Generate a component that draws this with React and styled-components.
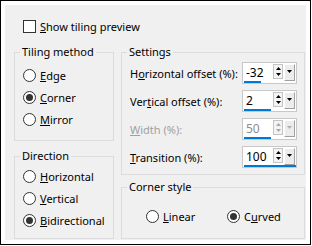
import React from 'react'
import styled, { createGlobalStyle } from 'styled-components'

const GlobalStyle = createGlobalStyle`
  html, body {
    margin: 0;
    padding: 0;
    background: #fff;
  }
  body {
    font-family: "Noto Sans", "Open Sans", sans-serif;
    font-size: 11px;
    color: #000;
  }
`

const Frame = styled.div`
  box-sizing: border-box;
  width: 311px;
  height: 245px;
  border: 1px solid #000;
  background: #fff;
  padding: 4px;
`

const Panel = styled.div`
  box-sizing: border-box;
  height: 100%;
  background: #f0f0f0;
  padding: 13px 1px 0 9px;
  display: flex;
  flex-direction: column;
`

const PreviewRow = styled.label`
  display: flex;
  align-items: center;
  gap: 4px;
  height: 16px;
  padding-left: 9px;
`

const Columns = styled.div`
  display: grid;
  grid-template-columns: 100px 184px;
  column-gap: 7px;
  margin-top: 18px;
`

const Column = styled.div`
  display: flex;
  flex-direction: column;
  gap: ${p => p.$gap}px;
`

const Group = styled.div`
  position: relative;
  box-sizing: border-box;
  height: ${p => p.$h}px;
  border: 1px solid #dcdcdc;
  padding: ${p => p.$pad};
  display: flex;
  flex-direction: ${p => (p.$row ? 'row' : 'column')};
  gap: ${p => p.$gap || 0}px;
`

// legend sits on top of the group's border line
const Legend = styled.span`
  position: absolute;
  top: -9px;
  left: 5px;
  padding: 0 2px;
  line-height: 16px;
  background: #f0f0f0;
`

const Option = styled.div`
  display: flex;
  align-items: center;
  gap: 4px;
  height: ${p => p.$h || 22}px;
  min-width: ${p => p.$w || 0}px;
`

const RadioDot = styled.span`
  box-sizing: border-box;
  flex: none;
  width: 13px;
  height: 13px;
  border: 1px solid #333;
  border-radius: 50%;
  background: #fff;
  display: flex;
  align-items: center;
  justify-content: center;

  &::after {
    content: '';
    width: 7px;
    height: 7px;
    border-radius: 50%;
    background: #333;
    display: ${p => (p.$checked ? 'block' : 'none')};
  }
`

const CheckBox = styled.span`
  box-sizing: border-box;
  flex: none;
  width: 13px;
  height: 13px;
  border: 1px solid #333;
  background: #fff;
`

const Key = styled.span`
  text-decoration: underline;
  text-underline-offset: 1px;
`

const SettingRow = styled.div`
  display: flex;
  align-items: center;
  justify-content: space-between;
  height: 22px;
  color: ${p => (p.$disabled ? '#a0a0a0' : '#000')};
`

const Spinner = styled.div`
  box-sizing: border-box;
  display: flex;
  flex-direction: column;
  width: 55px;
  height: 22px;
  border: 1px solid #c8c8c8;
  background: #fff;
  padding: 1px 1px 1px 1px;
`

const SpinTop = styled.div`
  flex: 1;
  display: flex;
  align-items: flex-start;
`

const Value = styled.div`
  flex: 1;
  min-width: 0;
  padding-left: 2px;
  line-height: 17px;
  font-size: 12px;
  color: ${p => (p.$disabled ? '#8c8c8c' : '#000')};
`

const Bar = styled.div`
  flex: none;
  height: 2px;
  width: ${p => p.$w}px;
  background: #0078d7;
`

const Arrows = styled.div`
  box-sizing: border-box;
  width: 10px;
  height: 15px;
  border: 1px solid #c4c4c4;
  background: #f4f4f4;
  display: flex;
  flex-direction: column;
  align-items: center;
  justify-content: space-around;
  margin-right: 1px;
`

const DropButton = styled.div`
  box-sizing: border-box;
  width: 11px;
  height: 17px;
  border-top: 1px solid #fff;
  border-left: 1px solid #fff;
  border-right: 1px solid #a0a0a0;
  border-bottom: 1px solid #a0a0a0;
  background: #ececec;
  display: flex;
  justify-content: center;
  padding-top: 5px;
`

const Tri = ({ up, color }) => (
  <svg width="5" height="3" viewBox="0 0 5 3">
    <path d={up ? 'M0 3 L2.5 0 L5 3 Z' : 'M0 0 L5 0 L2.5 3 Z'} fill={color} />
  </svg>
)

const Radio = ({ checked, children, h, w }) => (
  <Option $h={h} $w={w}>
    <RadioDot $checked={checked} />
    <span>{children}</span>
  </Option>
)

const SpinField = ({ value, bar, disabled }) => {
  const c = disabled ? '#a8a8a8' : '#000'
  return (
    <Spinner>
      <SpinTop>
        <Value $disabled={disabled}>{value}</Value>
        <Arrows>
          <Tri up color={c} />
          <Tri color={c} />
        </Arrows>
        <DropButton>
          <Tri color={disabled ? '#b0b0b0' : '#000'} />
        </DropButton>
      </SpinTop>
      <Bar $w={bar} />
    </Spinner>
  )
}

const settings = [
  { pre: 'H', key: 'o', post: 'rizontal offset (%):', value: '-32', bar: 17 },
  { pre: 'Ver', key: 't', post: 'ical offset (%):', value: '2', bar: 27 },
  { pre: '', key: 'W', post: 'idth (%):', value: '50', bar: 27, disabled: true },
  { pre: '', key: 'T', post: 'ransition (%):', value: '100', bar: 52 },
]

const App = () => {
  return (
    <Frame>
      <GlobalStyle />
      <Panel>
        <PreviewRow>
          <CheckBox />
          <span><Key>S</Key>how tiling preview</span>
        </PreviewRow>

        <Columns>
          <Column $gap={15}>
            <Group $h={89} $pad="11px 0 0 8px">
              <Legend>Tiling method</Legend>
              <Radio><Key>E</Key>dge</Radio>
              <Radio checked><Key>C</Key>orner</Radio>
              <Radio><Key>M</Key>irror</Radio>
            </Group>
            <Group $h={83} $pad="8px 0 0 8px">
              <Legend>Direction</Legend>
              <Radio><Key>H</Key>orizontal</Radio>
              <Radio><Key>V</Key>ertical</Radio>
              <Radio checked><Key>B</Key>idirectional</Radio>
            </Group>
          </Column>

          <Column $gap={12}>
            <Group $h={123} $pad="9px 7px 0 8px" $gap={6}>
              <Legend>Settings</Legend>
              {settings.map(s => (
                <SettingRow key={s.post} $disabled={s.disabled}>
                  <span>{s.pre}<Key>{s.key}</Key>{s.post}</span>
                  <SpinField value={s.value} bar={s.bar} disabled={s.disabled} />
                </SettingRow>
              ))}
            </Group>
            <Group $h={52} $pad="17px 0 0 24px" $row>
              <Legend>Corner style</Legend>
              <Radio h={22} w={81}><Key>L</Key>inear</Radio>
              <Radio h={22} checked>C<Key>u</Key>rved</Radio>
            </Group>
          </Column>
        </Columns>
      </Panel>
    </Frame>
  )
}

export default App
